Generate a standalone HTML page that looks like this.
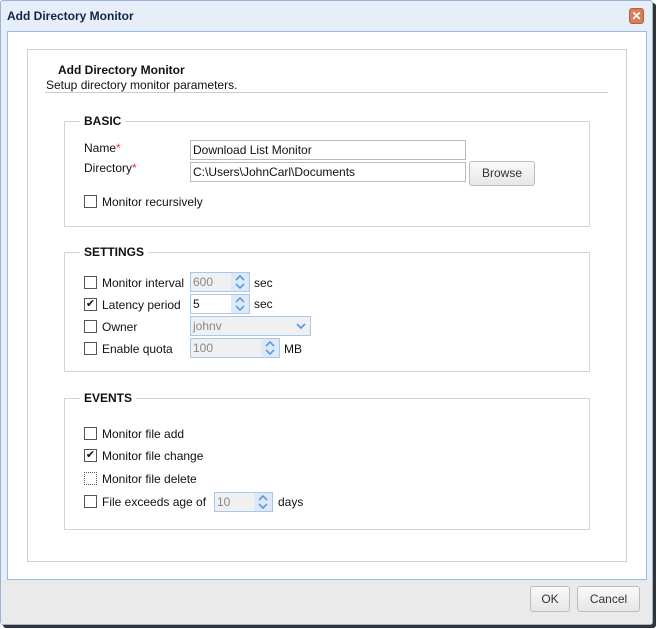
<!DOCTYPE html>
<html><head><meta charset="utf-8"><style>
*{box-sizing:border-box;margin:0;padding:0}
body{width:657px;height:629px;background:#fff;font-family:"Liberation Sans",Arial,sans-serif;font-size:12px;color:#111;position:relative;overflow:hidden}
.a{position:absolute}
.dlg{left:0;top:0;width:653px;height:625px;background:#e6eef9;border:1px solid #99b4d8;box-shadow:3px 3px 0 #333;border-radius:3px}
.title{left:7px;top:9px;font-weight:bold;font-size:12px;color:#15243d}
.close{left:629px;top:8px;width:15px;height:16px;background:#d77f5c;border:1px solid #b86040;border-radius:3px;color:#fff;font-weight:bold;font-size:12px;line-height:14px;text-align:center}
.inner{left:7px;top:31px;width:640px;height:549px;background:#fff;border:1px solid #99bbe8}
.foot{left:1px;top:580px;width:651px;height:44px;background:#eaeaea}
.panel{left:27px;top:49px;width:600px;height:513px;border:1px solid #d0d0d0}
.fs{border:1px solid #d4d4d4}
.lg{font-weight:bold;background:#fff;padding:0 4px}
.in{border:1px solid #b5b8c8;background:#fff;height:20px;padding:2px 2px;font-size:12px;line-height:14px}
.dis{background:#f0f0f0;border:1px solid #a9c7ee;color:#888}
.cb{width:13px;height:13px;border:1px solid #555;background:#fff;font-size:11px;line-height:10px;text-align:center}
.btn{border:1px solid #bcbcbc;border-radius:3px;background:linear-gradient(#fafafa,#e6e6e6);text-align:center;color:#333}
.spin{position:absolute;right:0;top:0;width:18px;height:100%;background:#dde9f7}
.spin svg{display:block}
.red{color:#e33}
</style></head><body>
<div class="a dlg"></div>
<div class="a title">Add Directory Monitor</div>
<div class="a close">✕</div>
<div class="a inner"></div>
<div class="a foot"></div>
<div class="a panel"></div>
<div class="a" style="left:58px;top:63px;font-weight:bold">Add Directory Monitor</div>
<div class="a" style="left:46px;top:78px">Setup directory monitor parameters.</div>
<div class="a" style="left:45px;top:92px;width:563px;height:1px;background:#ccc"></div>

<div class="a fs" style="left:64px;top:121px;width:526px;height:106px"></div>
<div class="a lg" style="left:80px;top:114px">BASIC</div>
<div class="a" style="left:84px;top:141px">Name<span class="red">*</span></div>
<div class="a" style="left:84px;top:161px">Directory<span class="red">*</span></div>
<div class="a in" style="left:190px;top:140px;width:276px">Download List Monitor</div>
<div class="a in" style="left:190px;top:162px;width:276px">C:\Users\JohnCarl\Documents</div>
<div class="a btn" style="left:469px;top:161px;width:66px;height:25px;line-height:23px">Browse</div>
<div class="a cb" style="left:84px;top:195px"></div>
<div class="a" style="left:102px;top:195px">Monitor recursively</div>

<div class="a fs" style="left:64px;top:252px;width:526px;height:120px"></div>
<div class="a lg" style="left:80px;top:245px">SETTINGS</div>
<div class="a cb" style="left:84px;top:276px"></div>
<div class="a" style="left:102px;top:276px">Monitor interval</div>
<div class="a in dis" style="left:190px;top:272px;width:60px">600<div class="spin"><svg width="18" height="18"><path d="M5 7 L9 3 L13 7 M5 11 L9 15 L13 11" fill="none" stroke="#5a9be0" stroke-width="1.6"/></svg></div></div>
<div class="a" style="left:254px;top:276px">sec</div>
<div class="a cb" style="left:84px;top:298px">✔</div>
<div class="a" style="left:102px;top:298px">Latency period</div>
<div class="a in" style="left:190px;top:294px;width:60px;border-color:#a9c7ee">5<div class="spin"><svg width="18" height="18"><path d="M5 7 L9 3 L13 7 M5 11 L9 15 L13 11" fill="none" stroke="#5a9be0" stroke-width="1.6"/></svg></div></div>
<div class="a" style="left:254px;top:297px">sec</div>
<div class="a cb" style="left:84px;top:320px"></div>
<div class="a" style="left:102px;top:320px">Owner</div>
<div class="a in dis" style="left:190px;top:316px;width:121px">johnv<div class="spin" style="background:#f0f0f0"><svg width="18" height="18"><path d="M5 7 L9 11 L13 7" fill="none" stroke="#5a9be0" stroke-width="1.8"/></svg></div></div>
<div class="a cb" style="left:84px;top:342px"></div>
<div class="a" style="left:102px;top:342px">Enable quota</div>
<div class="a in dis" style="left:190px;top:338px;width:90px">100<div class="spin"><svg width="18" height="18"><path d="M5 7 L9 3 L13 7 M5 11 L9 15 L13 11" fill="none" stroke="#5a9be0" stroke-width="1.6"/></svg></div></div>
<div class="a" style="left:284px;top:342px">MB</div>

<div class="a fs" style="left:64px;top:398px;width:526px;height:132px"></div>
<div class="a lg" style="left:80px;top:391px">EVENTS</div>
<div class="a cb" style="left:84px;top:427px"></div>
<div class="a" style="left:102px;top:427px">Monitor file add</div>
<div class="a cb" style="left:84px;top:449px">✔</div>
<div class="a" style="left:102px;top:449px">Monitor file change</div>
<div class="a cb" style="left:84px;top:472px;border-style:dotted"></div>
<div class="a" style="left:102px;top:472px">Monitor file delete</div>
<div class="a cb" style="left:84px;top:495px"></div>
<div class="a" style="left:102px;top:495px">File exceeds age of</div>
<div class="a in dis" style="left:214px;top:492px;width:59px">10<div class="spin"><svg width="18" height="18"><path d="M5 7 L9 3 L13 7 M5 11 L9 15 L13 11" fill="none" stroke="#5a9be0" stroke-width="1.6"/></svg></div></div>
<div class="a" style="left:278px;top:495px">days</div>

<div class="a btn" style="left:530px;top:586px;width:40px;height:26px;line-height:24px">OK</div>
<div class="a btn" style="left:577px;top:586px;width:63px;height:26px;line-height:24px">Cancel</div>
</body></html>
